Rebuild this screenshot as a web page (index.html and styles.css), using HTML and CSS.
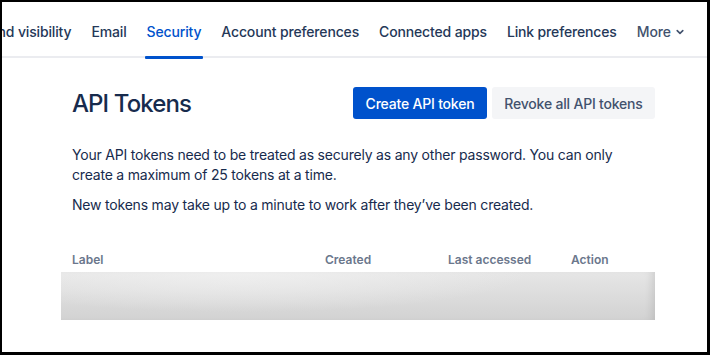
FILE: index.html
```html
<!DOCTYPE html>
<html>
<head>
<meta charset="utf-8">
<link rel="stylesheet" href="styles.css">
</head>
<body>
<div class="frame">
  <nav class="tabs">
    <div class="tab-list">
      <a class="tab">Profile and visibility</a>
      <a class="tab">Email</a>
      <a class="tab active">Security</a>
      <a class="tab">Account preferences</a>
      <a class="tab">Connected apps</a>
      <a class="tab">Link preferences</a>
      <a class="tab more">More <svg class="chev" width="10" height="10" viewBox="0 0 10 10"><path d="M2.2 3.6 L5 6.4 L7.8 3.6" fill="none" stroke="#42526e" stroke-width="1.6" stroke-linecap="round" stroke-linejoin="round"/></svg></a>
    </div>
  </nav>
  <main class="content">
    <div class="head-row">
      <h1 class="title">API Tokens</h1>
      <div class="actions">
        <button class="btn primary">Create API token</button>
        <button class="btn secondary">Revoke all API tokens</button>
      </div>
    </div>
    <p class="text">Your API tokens need to be treated as securely as any other password. You can only create a maximum of 25 tokens at a time.</p>
    <p class="text second">New tokens may take up to a minute to work after they’ve been created.</p>
    <div class="table-head">
      <span class="col label">Label</span>
      <span class="col created">Created</span>
      <span class="col accessed">Last accessed</span>
      <span class="col action">Action</span>
    </div>
    <div class="skeleton"></div>
  </main>
</div>
</body>
</html>
```

FILE: styles.css
```css
* { box-sizing: border-box; }
html, body { margin: 0; padding: 0; }
body {
  width: 710px;
  height: 355px;
  background: #000;
  font-family: Inter, "Noto Sans", sans-serif;
  color: #172b4d;
  overflow: hidden;
}
.frame {
  margin: 2px 3px 3px 2px;
  height: 350px;
  background: #fff;
  overflow: hidden;
}
.tabs {
  height: 56px;
  border-bottom: 2px solid #ebecf0;
  position: relative;
}
.tab-list {
  display: flex;
  height: 54px;
  padding-top: 4px;
  margin-left: -60px;
  gap: 16px;
}
.tab {
  position: relative;
  display: flex;
  align-items: center;
  padding: 0 2px;
  font-size: 14px;
  font-weight: 500;
  letter-spacing: -0.15px;
  color: #253858;
  white-space: nowrap;
  flex-shrink: 0;
}
.tab.active { color: #0052cc; }
.tab.active::after {
  content: "";
  position: absolute;
  left: 0;
  right: 0;
  bottom: -3px;
  height: 3px;
  background: #0052cc;
  border-radius: 1px;
}
.tab.more { color: #42526e; gap: 4px; }
.chev { margin-top: 1px; }
.content {
  width: 594px;
  margin-left: 59px;
  padding-top: 29px;
}
.head-row {
  display: flex;
  justify-content: space-between;
  align-items: center;
  padding-left: 11px;
  height: 32px;
}
.title {
  margin: 0;
  font-size: 24px;
  font-weight: 500;
  color: #172b4d;
  letter-spacing: -0.9px;
}
.actions { display: flex; gap: 5px; }
.btn {
  height: 32px;
  border: 0;
  border-radius: 3px;
  padding: 0;
  font-family: inherit;
  font-size: 14px;
  font-weight: 500;
  letter-spacing: -0.2px;
  white-space: nowrap;
}
.btn.primary { background: #0052cc; color: #fff; width: 134px; }
.btn.secondary { background: #f4f5f7; color: #42526e; width: 163px; }
.text {
  margin: 26px 0 0;
  padding-left: 11px;
  font-size: 14px;
  line-height: 20px;
  letter-spacing: -0.2px;
  color: #172b4d;
}
.text.second { margin-top: 10px; }
.table-head {
  display: flex;
  margin-top: 37px;
  height: 16px;
  font-size: 12px;
  font-weight: 600;
  color: #6b778c;
  line-height: 16px;
}
.col.label { margin-left: 11px; width: 253px; }
.col.created { width: 123px; }
.col.accessed { width: 123px; }
.skeleton {
  margin-top: 4px;
  height: 48px;
  background:
    radial-gradient(ellipse 70% 120% at 30% 0%, rgba(240,240,240,0.9), rgba(240,240,240,0) 70%),
    linear-gradient(to bottom, #e6e6e6, #d2d2d2);
  box-shadow: inset -8px 0 10px -6px rgba(0,0,0,0.12);
}
```
